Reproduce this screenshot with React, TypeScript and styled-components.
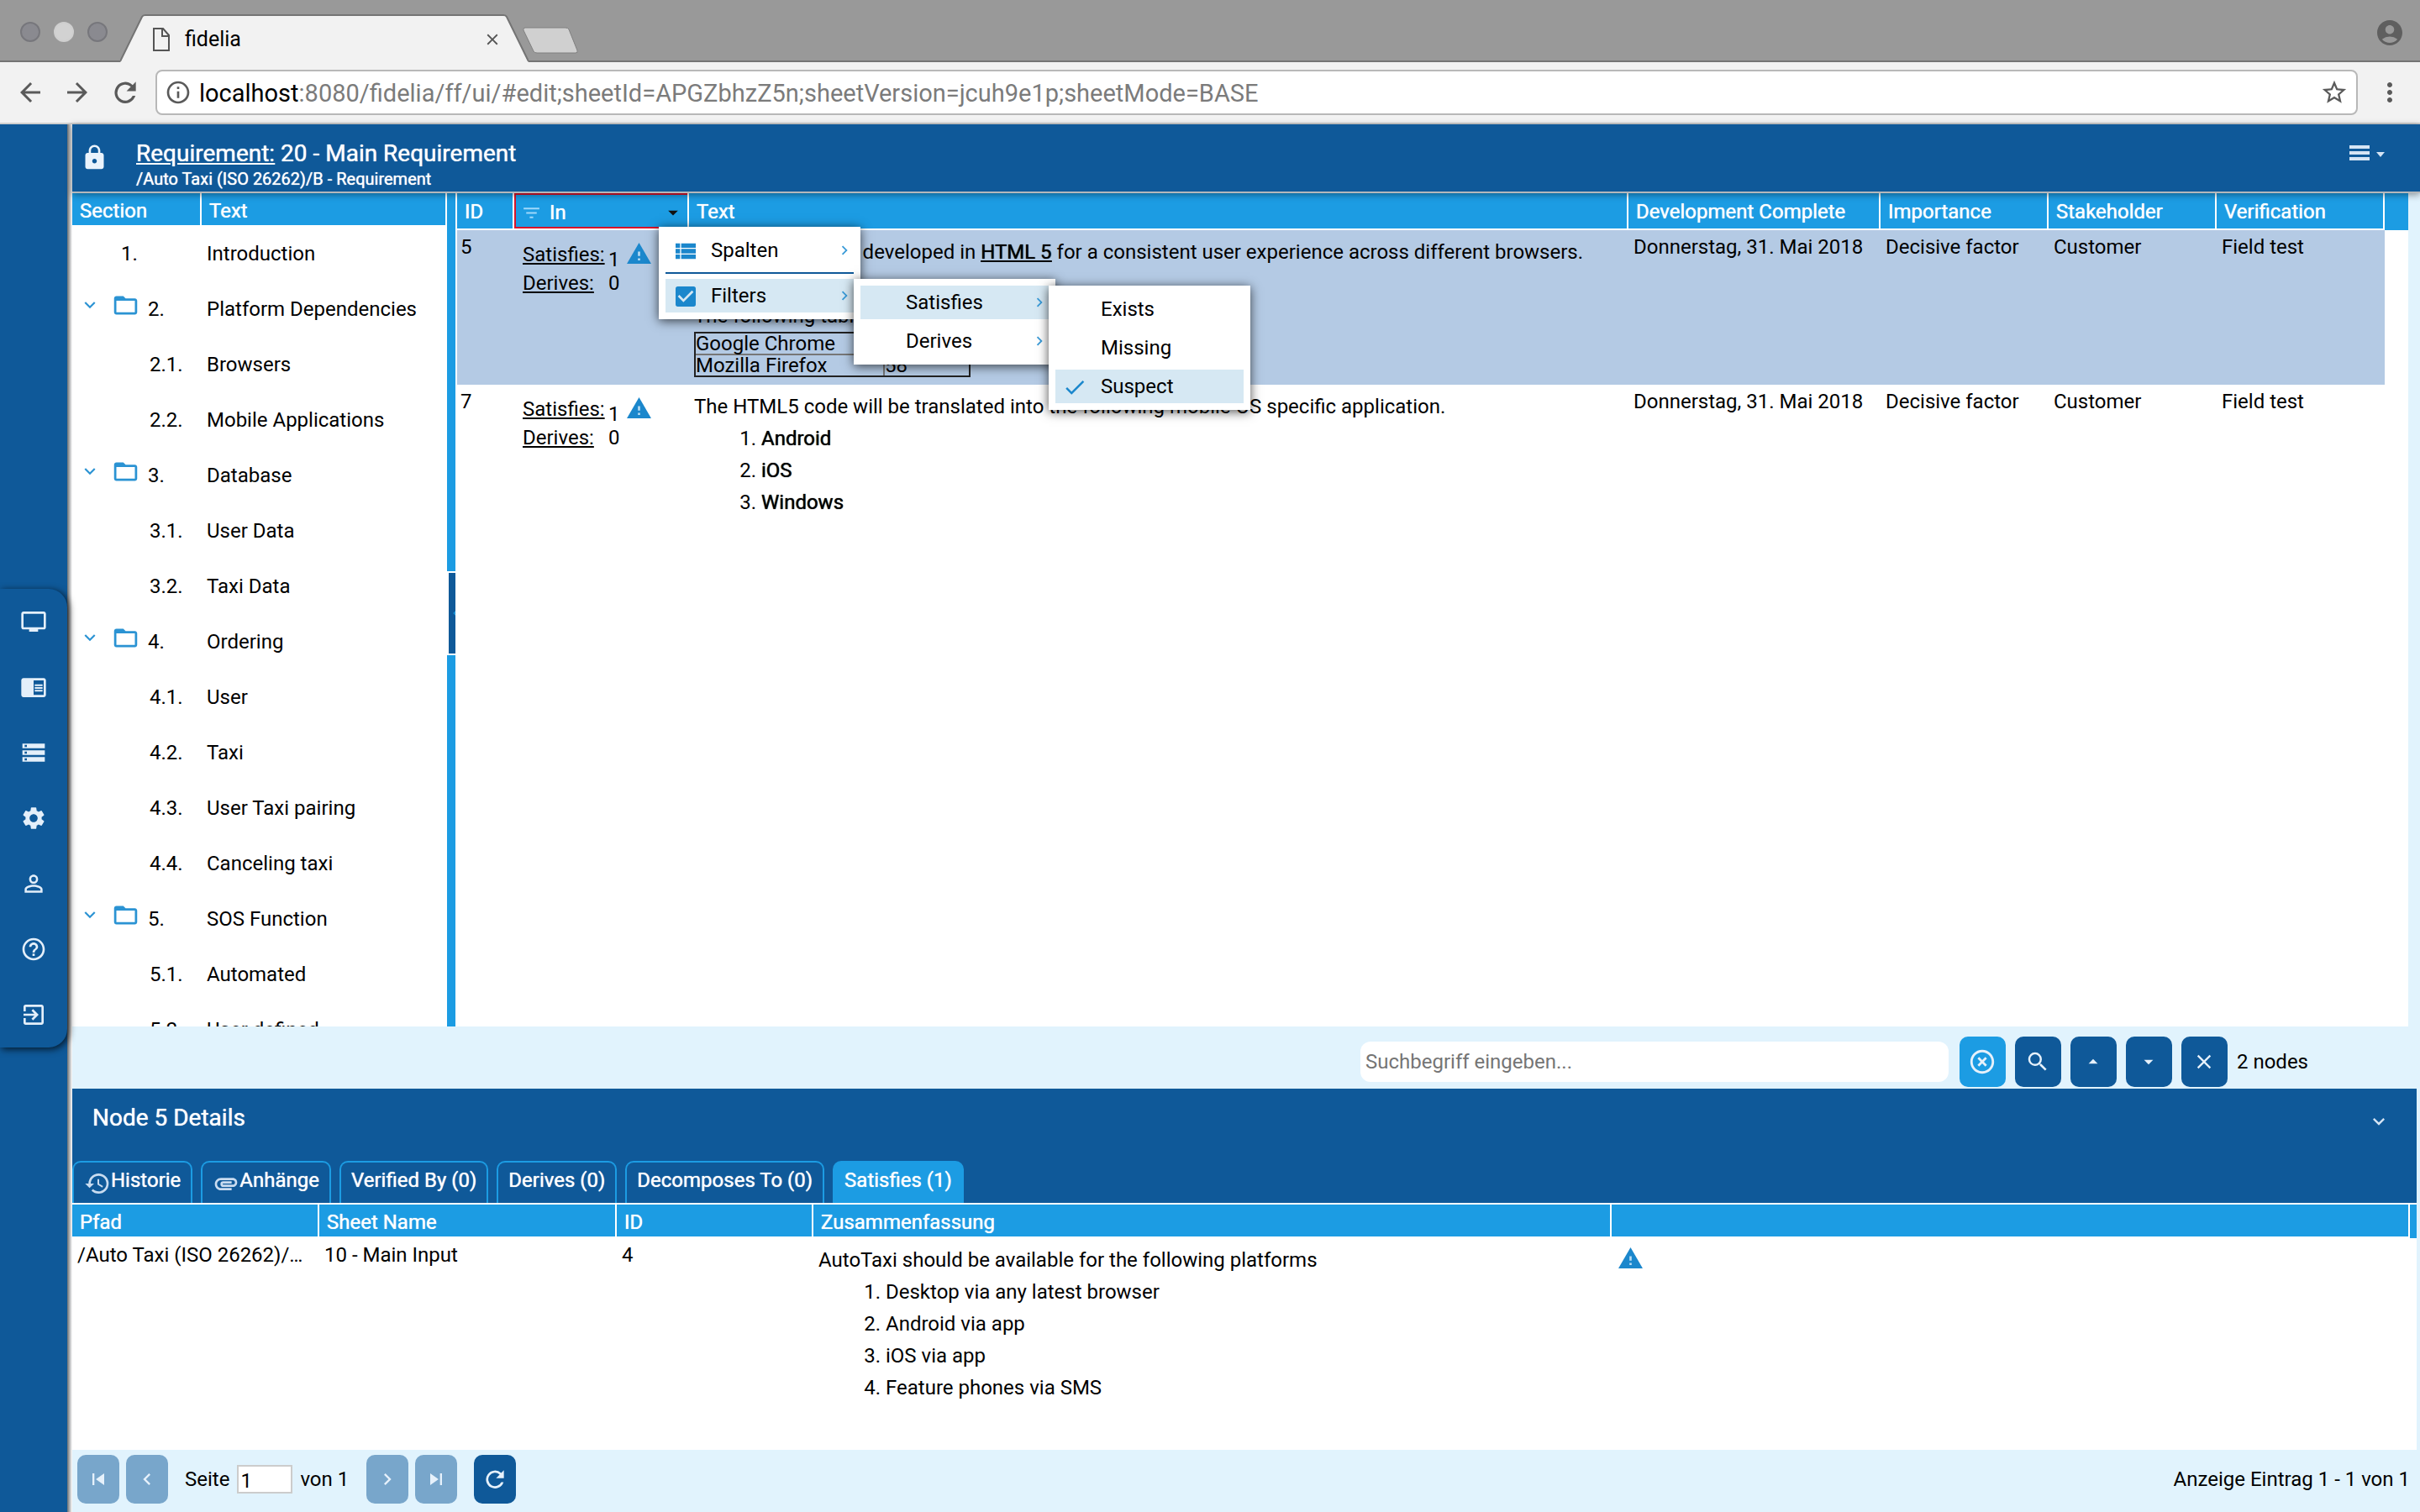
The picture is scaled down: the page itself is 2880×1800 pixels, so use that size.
import React from "react";
import styled, { createGlobalStyle, css } from "styled-components";
import {
  MdAccountCircle,
  MdArrowBack,
  MdArrowDropDown,
  MdArrowDropUp,
  MdArrowForward,
  MdAttachment,
  MdCheck,
  MdCheckBox,
  MdChevronLeft,
  MdChevronRight,
  MdChromeReaderMode,
  MdClose,
  MdExitToApp,
  MdExpandMore,
  MdFilterList,
  MdFolderOpen,
  MdHelpOutline,
  MdHighlightOff,
  MdHistory,
  MdInfoOutline,
  MdLock,
  MdMoreVert,
  MdPersonOutline,
  MdRefresh,
  MdSearch,
  MdSettings,
  MdSkipNext,
  MdSkipPrevious,
  MdStarBorder,
  MdStorage,
  MdTv,
  MdViewList,
} from "react-icons/md";

const c = {
  navy: "#0f5999",
  sky: "#1c9ce3",
  tint: "#e1f3fd",
  selected: "#b4cae4",
  hover: "#d6e8f3",
  icon: "#1b87cc",
};

const GlobalStyle = createGlobalStyle`
  *, *::before, *::after { box-sizing: border-box; }
  body {
    margin: 0;
    background: ${c.tint};
    color: #000;
    font-family: Roboto, "Liberation Sans", sans-serif;
    font-size: 24px;
    line-height: 28px;
  }
  button, input { font: inherit; color: inherit; }
  button { padding: 0; border: 0; background: none; cursor: pointer; }
  a { color: inherit; }
  svg { display: block; flex: none; }
  p { margin: 0; }
`;

/* Regular letters with slightly heavier stems. */
const heavier = css`
  font-weight: 400;
  text-shadow: 0 0 1px currentColor;
`;

const Page = styled.div`
  display: flex;
  flex-direction: column;
  height: 100vh;
  overflow: hidden;
`;

/* ---------- browser window ---------- */

const TabStrip = styled.div`
  display: flex;
  align-items: flex-end;
  height: 74px;
  padding-right: 18px;
  background: #999;
  border-bottom: 2px solid #747474;
`;

const WindowButtons = styled.div`
  display: flex;
  gap: 16px;
  padding: 0 0 22px 24px;
`;

const WindowButton = styled.button<{ $light?: boolean }>`
  width: 24px;
  height: 24px;
  border-radius: 50%;
  border: 2px solid ${(p) => (p.$light ? "#cfcfcf" : "#77777c")};
  background: ${(p) => (p.$light ? "#d2d2d2" : "#8a8a90")};
`;

const TabShape = styled.div`
  display: grid;
  width: 486px;
  height: 57px;
  margin: 0 0 -2px 15px;
  > * { grid-area: 1 / 1; }
`;

const TabContent = styled.div`
  display: flex;
  align-items: center;
  gap: 17px;
  padding: 2px 32px 0 38px;
  font-size: 25px;
  > span { flex: 1; }
`;

const NewTab = styled.button`
  padding: 0 0 8px 0;
  margin-left: -8px;
`;

const Profile = styled.button`
  margin: 0 0 15px auto;
  color: #5f5f5f;
`;

const Toolbar = styled.div`
  display: flex;
  align-items: center;
  height: 74px;
  padding: 0 18px;
  background: #f2f2f2;
  border-bottom: 2px solid #cfcfcf;
  color: #5a5a5a;
`;

const NavButtons = styled.div`
  display: flex;
  gap: 20px;
  width: 167px;
`;

const AddressBar = styled.div`
  display: flex;
  flex: 1;
  align-items: center;
  gap: 9px;
  height: 54px;
  margin-right: 20px;
  padding: 0 9px;
  background: #fff;
  border: 2px solid #b8b8b8;
  border-radius: 8px;
`;

const Address = styled.div`
  flex: 1;
  padding-top: 2px;
  color: #7b7b7b;
  font-size: 29px;
  line-height: 34px;
  outline: 0;
  b { font-weight: 400; color: #000; }
`;

/* ---------- application frame ---------- */

const Frame = styled.div`
  display: flex;
  flex: 1;
  min-height: 0;
`;

const Sidebar = styled.nav`
  display: flex;
  flex: none;
  align-items: center;
  width: 80px;
  background: ${c.navy};
`;

const SideMenu = styled.div`
  z-index: 2;
  width: 80px;
  border-radius: 0 22px 22px 0;
  background: ${c.navy};
  box-shadow: 2px 2px 8px rgba(0, 0, 0, 0.75);
`;

const SideButton = styled.button`
  display: grid;
  place-items: center;
  width: 80px;
  height: 78px;
  color: #e4effa;
`;

const Edge = styled.div`
  flex: none;
  width: 6px;
  background: linear-gradient(to right, #6b6f73, #fff);
`;

const Main = styled.main`
  display: flex;
  flex: 1;
  flex-direction: column;
  min-width: 0;
`;

const SheetHeader = styled.header`
  z-index: 1;
  display: flex;
  align-items: flex-start;
  height: 82px;
  padding: 20px 38px 0 10px;
  background: ${c.navy};
  border-bottom: 2px solid #b4b8bb;
  box-shadow: 0 2px 8px rgba(0, 0, 0, 0.4);
  color: #fff;
`;

const LockIcon = styled.div`
  width: 66px;
  padding-top: 3px;
  color: #eaf3fc;
`;

const Titles = styled.div`
  flex: 1;
  ${heavier}
`;

const Title = styled.h1`
  margin: 0;
  font-size: 28px;
  font-weight: 400;
  line-height: 30px;
`;

const Subtitle = styled.div`
  font-size: 20px;
  line-height: 30px;
`;

const MenuButton = styled.button`
  display: flex;
  color: #d5e4f4;
`;

/* ---------- tables ---------- */

const DataTable = styled.table`
  width: 100%;
  table-layout: fixed;
  border-spacing: 0;
`;

const Head = styled.th<{ $height: number; $rule?: boolean; $last?: boolean }>`
  height: ${(p) => p.$height}px;
  padding: ${(p) => (p.$height > 40 ? 2 : 4)}px 9px 0;
  background: ${c.sky};
  border: 0 solid #fff;
  border-right-width: ${(p) => (p.$last ? 0 : 2)}px;
  border-bottom-width: ${(p) => (p.$rule && !p.$last ? 2 : 0)}px;
  color: #fff;
  text-align: left;
  white-space: nowrap;
  ${heavier}
`;

const ActiveHead = styled(Head)`
  position: relative;
  padding: 0;
`;

const ActiveHeadBox = styled.div`
  display: flex;
  align-items: center;
  gap: 9px;
  height: 42px;
  padding: 4px 3px 0 6px;
  border: 2px solid #d9142a;
  border-right: 0;
  > span { flex: 1; }
`;

const SortButton = styled.button`
  color: #111;
`;

const Cell = styled.td`
  padding: 6px;
  vertical-align: top;
  overflow: hidden;
  text-overflow: ellipsis;
  white-space: nowrap;
`;

const IdCell = styled(Cell)`
  padding-left: 4px;
`;

const RichCell = styled.td`
  padding: 7px 6px;
  vertical-align: top;
  line-height: 38px;
`;

const Row = styled.tr<{ $selected?: boolean }>`
  height: 184px;
  ${(p) =>
    p.$selected &&
    css`
      > td:not(:last-child) { background: ${c.selected}; }
    `}
`;

const Strong = styled.span`
  ${heavier}
`;

const Items = styled.ol`
  margin: 0;
  padding-left: 80px;
`;

const Gap = styled.p`
  height: 38px;
`;

const VersionTable = styled.table`
  width: 329px;
  border: 2px solid #222;
  border-spacing: 0;
  line-height: 24px;
  td {
    padding: 0;
    border: 0 solid #777;
  }
  td:first-child {
    width: 225px;
    border-right-width: 2px;
  }
  tr:first-child td { border-bottom-width: 2px; }
`;

const LinkCell = styled.td`
  padding: 15px 10px;
  vertical-align: top;
`;

const LinkGrid = styled.div`
  display: grid;
  grid-template-columns: 102px 22px auto;
  grid-template-rows: 34px 28px;
  justify-content: start;
`;

const Count = styled.span`
  align-self: end;
`;

/* ---------- section tree ---------- */

const Split = styled.div`
  display: flex;
  flex: 1;
  min-height: 0;
  padding-right: 14px;
`;

const Pane = styled.section<{ $width?: number }>`
  flex: ${(p) => (p.$width ? "none" : 1)};
  width: ${(p) => (p.$width ? `${p.$width}px` : "auto")};
  min-width: 0;
  background: #fff;
`;

const TreePane = styled(Pane)`
  overflow: hidden;
`;

const TreeCell = styled.td`
  height: 66px;
  padding: 0;
`;

const TreeLine = styled.div<{ $indent: number }>`
  display: flex;
  align-items: center;
  height: 66px;
  padding: 2px 0 0 ${(p) => p.$indent}px;
`;

const TreeIcons = styled.button`
  display: flex;
  align-items: center;
  gap: 13px;
  width: 82px;
  padding-bottom: 10px;
  color: #2b93d3;
`;

const Splitter = styled.div`
  display: flex;
  flex: none;
  flex-direction: column;
  gap: 2px;
  width: 12px;
  padding-right: 2px;
  background: #fff;
`;

const SplitterBar = styled.div<{ $basis: number }>`
  flex: 1 1 ${(p) => p.$basis}px;
  background: ${c.sky};
`;

const SplitterThumb = styled.button`
  height: 96px;
  margin-left: 2px;
  background: ${c.navy};
  color: ${c.sky};
  overflow: hidden;
`;

/* ---------- pop-up menus ---------- */

const Menu = styled.div<{ $left: number; $top: number }>`
  position: absolute;
  z-index: 3;
  top: ${(p) => p.$top}px;
  left: ${(p) => p.$left}px;
  display: flex;
  flex-direction: column;
  gap: 6px;
  width: 240px;
  padding: 8px;
  background: #fff;
  box-shadow: 0 2px 12px rgba(0, 0, 0, 0.7);
  color: #000;
  text-shadow: none;
`;

const MenuItem = styled.button<{ $active?: boolean }>`
  display: flex;
  align-items: center;
  width: 100%;
  height: 40px;
  padding-left: 8px;
  background: ${(p) => (p.$active ? c.hover : "transparent")};
  text-align: left;
  > span { flex: 1; }
  > svg { color: #3a9bd8; }
`;

const MenuIcon = styled.i`
  width: 46px;
  padding-top: 2px;
  color: ${c.icon};
`;

const MenuRule = styled.hr`
  width: 100%;
  height: 2px;
  margin: 0;
  border: 0;
  background: ${c.navy};
`;

/* ---------- search bar ---------- */

const SearchBar = styled.form`
  display: flex;
  align-items: center;
  justify-content: flex-end;
  gap: 11px;
  height: 74px;
  padding: 10px 133px 0 0;
  background: ${c.tint};
`;

const SearchInput = styled.input`
  width: 700px;
  height: 48px;
  margin-right: 2px;
  padding: 0 6px;
  border: 0;
  border-radius: 12px;
  background: #fff;
  &::placeholder { color: #757575; opacity: 1; }
`;

const ActionButton = styled.button<{ $tone?: string; $width?: number }>`
  display: grid;
  place-items: center;
  width: ${(p) => p.$width ?? 55}px;
  height: ${(p) => (p.$width ? 58 : 60)}px;
  border-radius: 10px;
  background: ${(p) => p.$tone ?? c.navy};
  color: #e6f1fb;
`;

/* ---------- node details ---------- */

const Details = styled.section`
  display: flex;
  flex-direction: column;
  padding-right: 4px;
`;

const DetailsHeader = styled.div`
  display: flex;
  align-items: flex-start;
  justify-content: space-between;
  height: 86px;
  padding: 20px 31px 0 24px;
  background: ${c.navy};
  color: #fff;
  h2 {
    margin: 0;
    font-size: 28px;
    line-height: 30px;
    ${heavier}
  }
  button { padding-top: 5px; }
`;

const Tabs = styled.div`
  display: flex;
  gap: 10px;
  height: 52px;
  background: ${c.navy};
  border-bottom: 2px solid #fff;
`;

const Tab = styled.button<{ $active?: boolean }>`
  display: flex;
  align-items: center;
  padding: 0 12px 7px;
  border: 2px solid ${c.sky};
  border-bottom: 0;
  border-radius: 10px 10px 0 0;
  background: ${(p) => (p.$active ? c.sky : c.navy)};
  color: #fff;
  ${heavier}
  svg {
    margin-top: 8px;
    color: #c9dcf0;
  }
`;

const DetailsBody = styled.div`
  height: 292px;
  background: #fff;
`;

const IconCell = styled.td`
  padding: 11px 8px;
  vertical-align: top;
`;

const Pager = styled.footer`
  display: flex;
  align-items: center;
  gap: 8px;
  height: 74px;
  padding: 0 8px 4px 6px;
  background: ${c.tint};
`;

const PageField = styled.label`
  display: flex;
  align-items: center;
  gap: 9px;
  margin: 0 13px 0 12px;
  input {
    width: 66px;
    height: 34px;
    padding: 4px 2px 0;
    border: 2px solid #ccc;
    background: #fff;
  }
`;

const Reload = styled.div`
  flex: 1;
  padding-left: 12px;
`;

/* ---------- icons ---------- */

const Warning = () => (
  <svg width="29" height="25" viewBox="1 2 22 19" role="img" aria-label="Suspect">
    <path fill={c.icon} d="M1 21h22L12 2 1 21z" />
    <path fill="#b9dcf3" d="M11 10h2v4h-2zM11 16h2v2h-2z" />
  </svg>
);

const TabOutline = () => (
  <svg width="486" height="57" viewBox="0 0 486 57" aria-hidden="true">
    <path d="M0 57 L26 3 Q27 1 30 1 H456 Q459 1 460 3 L486 57 Z" fill="#f2f2f2" />
    <path
      d="M0 56 L26 3 Q27 1 30 1 H456 Q459 1 460 3 L486 56"
      fill="none"
      stroke="#747474"
      strokeWidth="2"
    />
  </svg>
);

const PageIcon = () => (
  <svg width="22" height="30" viewBox="0 0 22 30" fill="none" stroke="#555" strokeWidth="2">
    <path d="M2 2h11l7 8v18H2z" />
    <path d="M12 2v9h8" />
  </svg>
);

const ReloadIcon = ({ size }: { size: number }) => (
  <svg width={size} height={size} viewBox="0 0 24 24" fill="currentColor">
    <path d="M17.6 6.4A8 8 0 1 0 19.7 14.6h-2.1A6 6 0 1 1 16.2 7.8L13 11h7V4z" />
  </svg>
);

const Caret = ({ up }: { up?: boolean }) =>
  up ? <MdArrowDropUp size={26} /> : <MdArrowDropDown size={26} />;

/* ---------- data ---------- */

type Section = { no: string; text: string; kind: "plain" | "folder" | "leaf" };

const sections: Section[] = [
  { no: "1.", text: "Introduction", kind: "plain" },
  { no: "2.", text: "Platform Dependencies", kind: "folder" },
  { no: "2.1.", text: "Browsers", kind: "leaf" },
  { no: "2.2.", text: "Mobile Applications", kind: "leaf" },
  { no: "3.", text: "Database", kind: "folder" },
  { no: "3.1.", text: "User Data", kind: "leaf" },
  { no: "3.2.", text: "Taxi Data", kind: "leaf" },
  { no: "4.", text: "Ordering", kind: "folder" },
  { no: "4.1.", text: "User", kind: "leaf" },
  { no: "4.2.", text: "Taxi", kind: "leaf" },
  { no: "4.3.", text: "User Taxi pairing", kind: "leaf" },
  { no: "4.4.", text: "Canceling taxi", kind: "leaf" },
  { no: "5.", text: "SOS Function", kind: "folder" },
  { no: "5.1.", text: "Automated", kind: "leaf" },
  { no: "5.2.", text: "User defined", kind: "leaf" },
];

const indents = { plain: 58, folder: 8, leaf: 92 };

const sideItems = [
  { label: "Desktop", Icon: MdTv },
  { label: "Reader", Icon: MdChromeReaderMode },
  { label: "Sheets", Icon: MdStorage },
  { label: "Settings", Icon: MdSettings },
  { label: "Profile", Icon: MdPersonOutline },
  { label: "Help", Icon: MdHelpOutline },
  { label: "Logout", Icon: MdExitToApp },
];

const tabs = [
  { label: "Historie", Icon: MdHistory },
  { label: "Anhänge", Icon: MdAttachment },
  { label: "Verified By (0)" },
  { label: "Derives (0)" },
  { label: "Decomposes To (0)" },
  { label: "Satisfies (1)", active: true },
];

/* ---------- parts ---------- */

function BrowserChrome() {
  return (
    <>
      <TabStrip>
        <WindowButtons>
          <WindowButton aria-label="Close window" />
          <WindowButton $light aria-label="Minimise window" />
          <WindowButton aria-label="Zoom window" />
        </WindowButtons>
        <TabShape>
          <TabOutline />
          <TabContent>
            <PageIcon />
            <span>fidelia</span>
            <button aria-label="Close tab">
              <MdClose size={22} color="#555" />
            </button>
          </TabContent>
        </TabShape>
        <NewTab aria-label="New tab">
          <svg width="68" height="32" viewBox="0 0 68 32">
            <path
              d="M4 1H52Q55 1 56 3L66 28Q67 31 64 31H18Q15 31 14 29L2 4Q1 1 4 1Z"
              fill="#d0d0d0"
              stroke="#808080"
              strokeWidth="1"
            />
          </svg>
        </NewTab>
        <Profile aria-label="Profile">
          <MdAccountCircle size={36} />
        </Profile>
      </TabStrip>
      <Toolbar>
        <NavButtons>
          <button aria-label="Back">
            <MdArrowBack size={36} />
          </button>
          <button aria-label="Forward">
            <MdArrowForward size={36} />
          </button>
          <button aria-label="Reload">
            <ReloadIcon size={38} />
          </button>
        </NavButtons>
        <AddressBar>
          <MdInfoOutline size={32} />
          <Address
            role="textbox"
            aria-label="Address"
            contentEditable
            suppressContentEditableWarning
            spellCheck={false}
          >
            <b>localhost</b>:8080/fidelia/ff/ui/#edit;sheetId=APGZbhzZ5n;sheetVersion=jcuh9e1p;sheetMode=BASE
          </Address>
          <button aria-label="Bookmark">
            <MdStarBorder size={34} />
          </button>
        </AddressBar>
        <button aria-label="Browser menu">
          <MdMoreVert size={36} />
        </button>
      </Toolbar>
    </>
  );
}

function SectionTree() {
  return (
    <TreePane $width={446}>
      <DataTable>
        <colgroup>
          <col width="154" />
          <col />
        </colgroup>
        <thead>
          <tr>
            <Head $height={38}>Section</Head>
            <Head $height={38}>Text</Head>
          </tr>
        </thead>
        <tbody>
          {sections.map((s) => (
            <tr key={s.no}>
              <TreeCell>
                <TreeLine $indent={indents[s.kind]}>
                  {s.kind === "folder" && (
                    <TreeIcons aria-label={`Toggle ${s.text}`}>
                      <MdExpandMore size={26} />
                      <MdFolderOpen size={33} />
                    </TreeIcons>
                  )}
                  {s.no}
                </TreeLine>
              </TreeCell>
              <TreeCell>
                <TreeLine $indent={6}>{s.text}</TreeLine>
              </TreeCell>
            </tr>
          ))}
        </tbody>
      </DataTable>
    </TreePane>
  );
}

function ColumnMenus() {
  return (
    <>
      <Menu $left={172} $top={40} role="menu">
        <MenuItem role="menuitem">
          <MenuIcon>
            <MdViewList size={32} />
          </MenuIcon>
          <span>Spalten</span>
          <MdChevronRight size={22} />
        </MenuItem>
        <MenuRule />
        <MenuItem role="menuitem" $active>
          <MenuIcon>
            <MdCheckBox size={32} />
          </MenuIcon>
          <span>Filters</span>
          <MdChevronRight size={22} />
        </MenuItem>
      </Menu>
      <Menu $left={404} $top={102} role="menu">
        <MenuItem role="menuitem" $active>
          <MenuIcon />
          <span>Satisfies</span>
          <MdChevronRight size={22} />
        </MenuItem>
        <MenuItem role="menuitem">
          <MenuIcon />
          <span>Derives</span>
          <MdChevronRight size={22} />
        </MenuItem>
      </Menu>
      <Menu $left={636} $top={110} role="menu">
        <MenuItem role="menuitem">
          <MenuIcon />
          <span>Exists</span>
        </MenuItem>
        <MenuItem role="menuitem">
          <MenuIcon />
          <span>Missing</span>
        </MenuItem>
        <MenuItem role="menuitemcheckbox" aria-checked="true" $active>
          <MenuIcon>
            <MdCheck size={30} />
          </MenuIcon>
          <span>Suspect</span>
        </MenuItem>
      </Menu>
    </>
  );
}

function Links() {
  return (
    <LinkCell>
      <LinkGrid>
        <a href="#satisfies">Satisfies:</a>
        <Count>1</Count>
        <Warning />
        <a href="#derives">Derives:</a>
        <Count>0</Count>
      </LinkGrid>
    </LinkCell>
  );
}

function Attributes() {
  return (
    <>
      <Cell>Donnerstag, 31. Mai 2018</Cell>
      <Cell>Decisive factor</Cell>
      <Cell>Customer</Cell>
      <Cell>Field test</Cell>
      <Cell />
    </>
  );
}

function Requirements() {
  return (
    <Pane>
      <DataTable>
        <colgroup>
          <col width="68" />
          <col width="208" />
          <col />
          <col width="300" />
          <col width="200" />
          <col width="200" />
          <col width="200" />
          <col width="28" />
        </colgroup>
        <thead>
          <tr>
            <Head $height={44} $rule>ID</Head>
            <ActiveHead $height={44} $rule>
              <ActiveHeadBox>
                <MdFilterList size={25} color="#9fd8fb" />
                <span>In</span>
                <SortButton aria-label="Column menu">
                  <MdArrowDropDown size={28} />
                </SortButton>
              </ActiveHeadBox>
              <ColumnMenus />
            </ActiveHead>
            <Head $height={44} $rule>Text</Head>
            <Head $height={44} $rule>Development Complete</Head>
            <Head $height={44} $rule>Importance</Head>
            <Head $height={44} $rule>Stakeholder</Head>
            <Head $height={44} $rule>Verification</Head>
            <Head $height={44} $rule $last />
          </tr>
        </thead>
        <tbody>
          <Row $selected>
            <IdCell>5</IdCell>
            <Links />
            <RichCell>
              <p>
                The GUI should be developed in{" "}
                <Strong as="a" href="#html5">HTML 5</Strong> for a consistent user experience
                across different browsers.
              </p>
              <Gap />
              <p>The following table lists the browsers.</p>
              <VersionTable>
                <tbody>
                  <tr>
                    <td>Google Chrome</td>
                    <td>63</td>
                  </tr>
                  <tr>
                    <td>Mozilla Firefox</td>
                    <td>58</td>
                  </tr>
                </tbody>
              </VersionTable>
            </RichCell>
            <Attributes />
          </Row>
          <Row>
            <IdCell>7</IdCell>
            <Links />
            <RichCell>
              <p>
                The HTML5 code will be translated into the following mobile OS specific
                application.
              </p>
              <Items>
                <li>
                  <Strong>Android</Strong>
                </li>
                <li>
                  <Strong>iOS</Strong>
                </li>
                <li>
                  <Strong>Windows</Strong>
                </li>
              </Items>
            </RichCell>
            <Attributes />
          </Row>
        </tbody>
      </DataTable>
    </Pane>
  );
}

function NodeDetails() {
  return (
    <Details>
      <DetailsHeader>
        <h2>Node 5 Details</h2>
        <button aria-label="Collapse details">
          <MdExpandMore size={28} color="#d5e4f4" />
        </button>
      </DetailsHeader>
      <Tabs role="tablist">
        {tabs.map(({ label, Icon, active }) => (
          <Tab key={label} role="tab" aria-selected={!!active} $active={active}>
            {Icon && <Icon size={32} />}
            {label}
          </Tab>
        ))}
      </Tabs>
      <DetailsBody>
        <DataTable>
          <colgroup>
            <col width="294" />
            <col width="354" />
            <col width="234" />
            <col width="950" />
            <col />
            <col width="8" />
          </colgroup>
          <thead>
            <tr>
              <Head $height={40} $rule>Pfad</Head>
              <Head $height={40} $rule>Sheet Name</Head>
              <Head $height={40} $rule>ID</Head>
              <Head $height={40} $rule>Zusammenfassung</Head>
              <Head $height={40} $rule />
              <Head $height={40} $rule $last />
            </tr>
          </thead>
          <tbody>
            <tr>
              <Cell>/Auto Taxi (ISO 26262)/B - Requirement</Cell>
              <Cell>10 - Main Input</Cell>
              <Cell>4</Cell>
              <RichCell>
                <p>AutoTaxi should be available for the following platforms</p>
                <Items>
                  <li>Desktop via any latest browser</li>
                  <li>Android via app</li>
                  <li>iOS via app</li>
                  <li>Feature phones via SMS</li>
                </Items>
              </RichCell>
              <IconCell>
                <Warning />
              </IconCell>
              <Cell />
            </tr>
          </tbody>
        </DataTable>
      </DetailsBody>
      <Pager>
        <ActionButton $width={50} $tone="#78a6cb" aria-label="First page">
          <MdSkipPrevious size={28} />
        </ActionButton>
        <ActionButton $width={50} $tone="#78a6cb" aria-label="Previous page">
          <MdChevronLeft size={28} />
        </ActionButton>
        <PageField>
          Seite
          <input defaultValue="1" />
          von 1
        </PageField>
        <ActionButton $width={50} $tone="#78a6cb" aria-label="Next page">
          <MdChevronRight size={28} />
        </ActionButton>
        <ActionButton $width={50} $tone="#78a6cb" aria-label="Last page">
          <MdSkipNext size={28} />
        </ActionButton>
        <Reload>
          <ActionButton $width={50} aria-label="Refresh">
            <ReloadIcon size={32} />
          </ActionButton>
        </Reload>
        <span>Anzeige Eintrag 1 - 1 von 1</span>
      </Pager>
    </Details>
  );
}

export default function App() {
  return (
    <Page>
      <GlobalStyle />
      <BrowserChrome />
      <Frame>
        <Sidebar>
          <SideMenu>
            {sideItems.map(({ label, Icon }) => (
              <SideButton key={label} aria-label={label}>
                <Icon size={32} />
              </SideButton>
            ))}
          </SideMenu>
        </Sidebar>
        <Edge />
        <Main>
          <SheetHeader>
            <LockIcon>
              <MdLock size={33} />
            </LockIcon>
            <Titles>
              <Title>
                <a href="#requirement">Requirement:</a> 20 - Main Requirement
              </Title>
              <Subtitle>/Auto Taxi (ISO 26262)/B - Requirement</Subtitle>
            </Titles>
            <MenuButton aria-label="Sheet menu">
              <svg width="46" height="28" viewBox="0 0 46 28" fill="currentColor">
                <path d="M0 5h24v4H0zM0 12h24v4H0zM0 19h24v4H0zM32 13h10l-5 6z" />
              </svg>
            </MenuButton>
          </SheetHeader>
          <Split>
            <SectionTree />
            <Splitter>
              <SplitterBar $basis={8} />
              <SplitterThumb aria-label="Collapse sections">
                <MdChevronLeft size={16} />
              </SplitterThumb>
              <SplitterBar $basis={0} />
            </Splitter>
            <Requirements />
          </Split>
          <SearchBar onSubmit={(e) => e.preventDefault()}>
            <SearchInput aria-label="Suchbegriff" placeholder="Suchbegriff eingeben..." />
            <ActionButton type="button" $tone={c.sky} aria-label="Clear search">
              <MdHighlightOff size={34} />
            </ActionButton>
            <ActionButton aria-label="Search">
              <MdSearch size={30} />
            </ActionButton>
            <ActionButton type="button" aria-label="Previous match">
              <Caret up />
            </ActionButton>
            <ActionButton type="button" aria-label="Next match">
              <Caret />
            </ActionButton>
            <ActionButton type="button" aria-label="Close search">
              <MdClose size={28} />
            </ActionButton>
            <span>2 nodes</span>
          </SearchBar>
          <NodeDetails />
        </Main>
      </Frame>
    </Page>
  );
}
